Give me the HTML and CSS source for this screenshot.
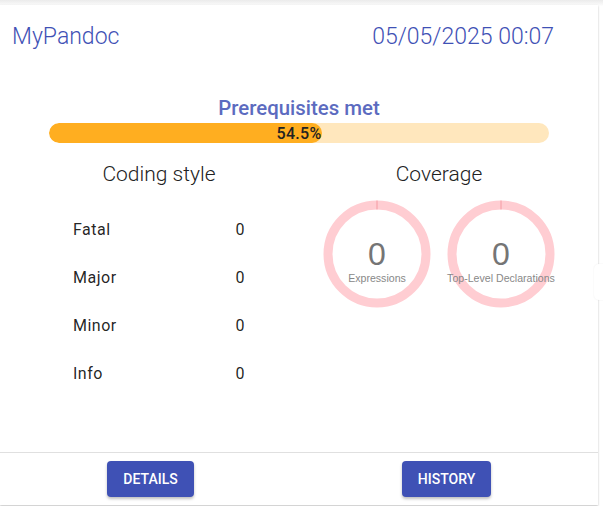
FILE: index.html
```html
<!DOCTYPE html>
<html>
<head>
<meta charset="utf-8">
<link rel="stylesheet" href="styles.css">
</head>
<body>
<div class="card">
  <div class="header">
    <span class="title">MyPandoc</span>
    <span class="date">05/05/2025 00:07</span>
  </div>
  <div class="content">
    <div class="prereq">Prerequisites met</div>
    <div class="bar">
      <div class="fill" style="width:54.5%"></div>
      <span class="pct">54.5%</span>
    </div>
    <div class="cols">
      <div class="col">
        <div class="col-title">Coding style</div>
        <div class="table">
          <div class="row"><span>Fatal</span><span>0</span></div>
          <div class="row"><span>Major</span><span>0</span></div>
          <div class="row"><span>Minor</span><span>0</span></div>
          <div class="row"><span>Info</span><span>0</span></div>
        </div>
      </div>
      <div class="col">
        <div class="col-title">Coverage</div>
        <div class="gauges">
          <div class="gauge">
            <svg width="108" height="108" viewBox="0 0 108 108">
              <circle cx="54" cy="54" r="49" fill="none" stroke="#ffcdd2" stroke-width="9"/>
              <line x1="54" y1="0.5" x2="54" y2="9.5" stroke="#f59aa2" stroke-width="1"/>
            </svg>
            <div class="g-text">
              <span class="g-num">0</span>
              <span class="g-label">Expressions</span>
            </div>
          </div>
          <div class="gauge">
            <svg width="108" height="108" viewBox="0 0 108 108">
              <circle cx="54" cy="54" r="49" fill="none" stroke="#ffcdd2" stroke-width="9"/>
              <line x1="54" y1="0.5" x2="54" y2="9.5" stroke="#f59aa2" stroke-width="1"/>
            </svg>
            <div class="g-text">
              <span class="g-num">0</span>
              <span class="g-label">Top-Level Declarations</span>
            </div>
          </div>
        </div>
      </div>
    </div>
  </div>
  <div class="footer">
    <div class="fcell"><button class="btn">Details</button></div>
    <div class="fcell"><button class="btn">History</button></div>
  </div>
</div>
<div class="peek"></div>
</body>
</html>
```
FILE: styles.css
```css
html, body {
  margin: 0;
  padding: 0;
}
body {
  width: 603px;
  height: 506px;
  overflow: hidden;
  position: relative;
  font-family: Roboto, "Liberation Sans", sans-serif;
  background: linear-gradient(to bottom, #ebebeb 0, #f4f4f4 3px, #fafafa 5px, #fff 6px) no-repeat;
  padding-top: 5px;
  box-sizing: border-box;
}
.card {
  width: 598px;
  height: 500px;
  background: #fff;
  box-shadow: 0 1px 2px rgba(0,0,0,0.25);
  display: flex;
  flex-direction: column;
}
.header {
  display: flex;
  justify-content: space-between;
  padding: 16px 44px 0 12px;
  line-height: 32px;
  font-size: 23px;
  font-weight: 300;
  color: #3f51b5;
}
.content {
  flex: 1;
  padding: 0 19px;
  display: flex;
  flex-direction: column;
  align-items: center;
}
.prereq {
  margin-top: 43px;
  font-size: 20.4px;
  font-weight: 500;
  color: #5c6bc0;
  line-height: 24px;
}
.bar {
  margin-top: 3px;
  width: 500px;
  height: 20px;
  border-radius: 10px;
  background: #ffe7bd;
  position: relative;
  overflow: hidden;
  display: flex;
  align-items: center;
  justify-content: center;
}
.fill {
  position: absolute;
  left: 0;
  top: 0;
  bottom: 0;
  background: #ffae20;
  border-radius: 10px;
}
.pct {
  position: relative;
  font-size: 16px;
  font-weight: 500;
  letter-spacing: 0.3px;
  color: #222;
}
.cols {
  align-self: stretch;
  display: grid;
  grid-template-columns: 1fr 1fr;
  margin-top: 17px;
}
.col {
  display: flex;
  flex-direction: column;
  align-items: center;
}
.col-title {
  font-size: 21px;
  font-weight: 300;
  line-height: 28px;
  color: #222;
}
.table {
  margin-top: 17px;
  width: 172px;
}
.row {
  display: flex;
  justify-content: space-between;
  height: 48px;
  align-items: center;
  font-size: 16px;
  letter-spacing: 0.5px;
  color: rgba(0,0,0,0.87);
}
.gauges {
  margin-top: 12px;
  display: flex;
  gap: 16px;
}
.gauge {
  position: relative;
  width: 108px;
  height: 108px;
}
.gauge svg {
  display: block;
}
.g-text {
  position: absolute;
  inset: 0;
  display: flex;
  flex-direction: column;
  align-items: center;
  justify-content: center;
  padding-top: 14px;
  box-sizing: border-box;
  font-family: "Liberation Sans", Arial, sans-serif;
}
.g-num {
  font-size: 32px;
  line-height: 34px;
  color: #757575;
}
.g-label {
  font-size: 10.6px;
  line-height: 14px;
  color: #888;
  white-space: nowrap;
}
.footer {
  height: 52px;
  border-top: 1px solid #e0e0e0;
  display: grid;
  grid-template-columns: 1fr 1fr;
  align-items: center;
}
.fcell {
  display: flex;
  justify-content: center;
}
.btn {
  height: 36px;
  padding: 0 16px;
  border: none;
  border-radius: 4px;
  background: #3f51b5;
  color: #fff;
  font-family: Roboto, "Liberation Sans", sans-serif;
  font-size: 14px;
  font-weight: 500;
  text-transform: uppercase;
  letter-spacing: 0;
  box-shadow: 0 2px 3px rgba(0,0,0,0.25);
}
.fcell:first-child .btn {
  margin-left: 2px;
}
.fcell:last-child .btn {
  margin-right: 4px;
}
.peek {
  position: absolute;
  left: 594px;
  top: 264px;
  width: 20px;
  height: 36px;
  border-radius: 5px;
  background: #fff;
  box-shadow: 0 0 2px rgba(0,0,0,0.07);
}
```
